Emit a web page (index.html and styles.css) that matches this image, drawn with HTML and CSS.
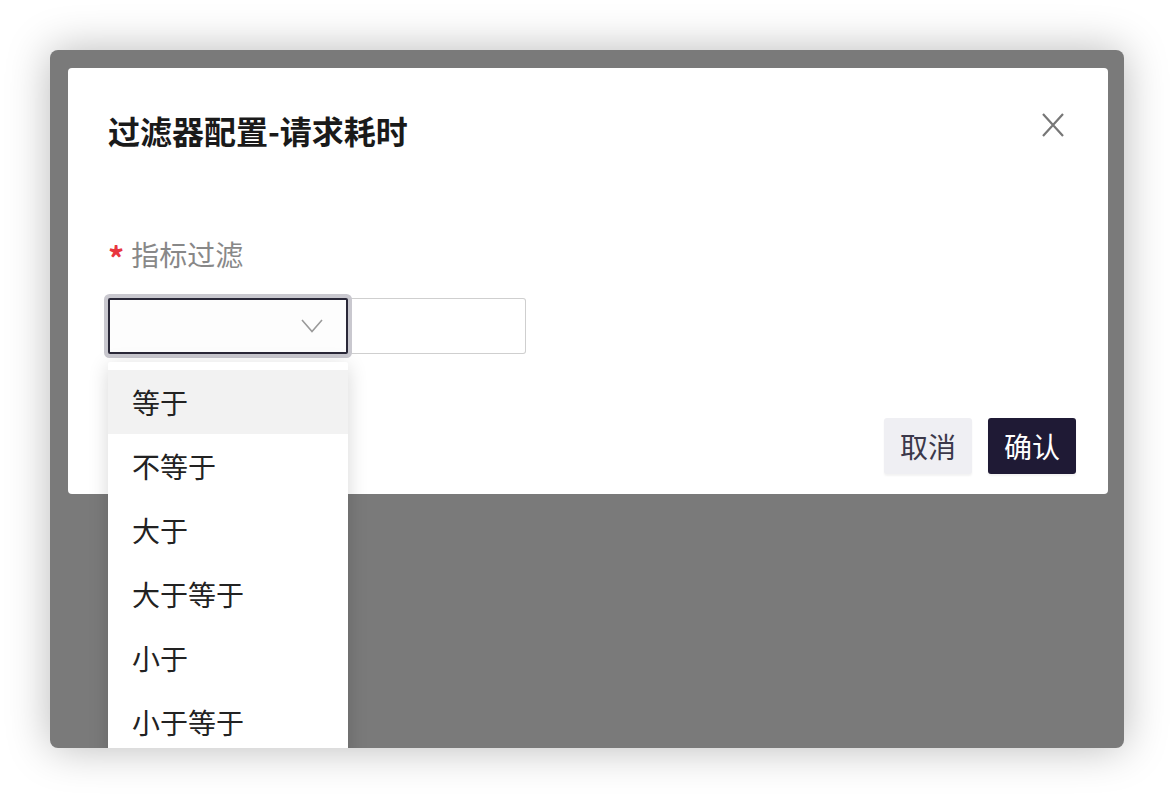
FILE: index.html
```html
<!DOCTYPE html>
<html lang="zh">
<head>
<meta charset="utf-8">
<link rel="stylesheet" href="styles.css">
</head>
<body>
<div class="frame">
  <div class="modal">
    <div class="header">
      <h1 class="title">过滤器配置-请求耗时</h1>
      <button class="close" aria-label="关闭">
        <svg width="22" height="24" viewBox="0 0 22 24"><path d="M1 1 L21 23 M21 1 L1 23" stroke="#777" stroke-width="2.2" fill="none"/></svg>
      </button>
    </div>
    <div class="field">
      <div class="label"><span class="req">*</span>指标过滤</div>
      <div class="controls">
        <div class="select-wrap">
          <div class="select">
            <svg class="chev" width="22" height="14" viewBox="0 0 22 14"><path d="M1 1 L11 12.5 L21 1" stroke="#9a9a9a" stroke-width="1.6" fill="none"/></svg>
          </div>
          <ul class="menu">
            <li class="item active">等于</li>
            <li class="item">不等于</li>
            <li class="item">大于</li>
            <li class="item">大于等于</li>
            <li class="item">小于</li>
            <li class="item">小于等于</li>
          </ul>
        </div>
        <div class="input"></div>
      </div>
    </div>
    <div class="footer">
      <button class="btn cancel">取消</button>
      <button class="btn ok">确认</button>
    </div>
  </div>
</div>
</body>
</html>
```
FILE: styles.css
```css
* { box-sizing: border-box; }
html, body { margin: 0; padding: 0; background: #fff; }
body {
  font-family: "Noto Sans CJK SC", "Noto Sans", sans-serif;
  width: 1174px; height: 798px; overflow: hidden;
}
.frame {
  margin: 50px;
  width: 1074px;
  height: 698px;
  background: #7a7a7a;
  border-radius: 8px;
  overflow: hidden;
  padding: 18px 16px 18px 18px;
  box-shadow: 0 0 44px rgba(0,0,0,0.28);
}
.modal {
  background: #fff;
  border-radius: 4px;
  height: 426px;
  padding: 42px 32px 20px 40px;
  display: flex;
  flex-direction: column;
}
.header {
  display: flex;
  justify-content: space-between;
  align-items: flex-start;
}
.title {
  margin: 0;
  font-size: 32px;
  line-height: 40px;
  font-weight: 700;
  color: #1a1a1a;
}
.close {
  border: none;
  background: none;
  padding: 0;
  margin: 3px 12px 0 0;
  width: 22px;
  height: 24px;
  cursor: pointer;
}
.close svg { display: block; }
.field { margin-top: 84px; }
.label {
  font-size: 28px;
  line-height: 40px;
  color: #888;
  display: flex;
  align-items: center;
}
.req {
  color: #e8363f;
  font-size: 32px;
  font-weight: 700;
  margin-right: 7px;
  position: relative;
  top: 3px;
}
.controls {
  margin-top: 24px;
  display: flex;
}
.select-wrap {
  position: relative;
  width: 240px;
}
.select {
  height: 56px;
  border: 2px solid #2a2838;
  border-radius: 2px;
  box-shadow: 0 0 0 4px #c9c8cf;
  background: #fdfdfd;
  display: flex;
  align-items: center;
  justify-content: flex-end;
  padding-right: 23px;
}
.chev { display: block; }
.input {
  width: 178px;
  height: 56px;
  border: 1px solid #cfcfcf;
  border-left: none;
  border-radius: 0 3px 3px 0;
  background: #fff;
}
.menu {
  position: absolute;
  left: 0;
  top: 64px;
  width: 240px;
  margin: 0;
  padding: 8px 0 8px;
  list-style: none;
  background: #fff;
  border-radius: 2px;
  box-shadow: 0 4px 20px rgba(0,0,0,0.16);
  z-index: 5;
}
.item {
  height: 64px;
  line-height: 64px;
  padding-left: 24px;
  font-size: 28px;
  color: #222;
}
.item.active { background: #f2f2f2; }
.footer {
  margin-top: auto;
  display: flex;
  justify-content: flex-end;
  gap: 16px;
}
.btn {
  width: 88px;
  height: 56px;
  border: none;
  border-radius: 3px;
  font-family: inherit;
  font-size: 28px;
  padding: 0;
  box-shadow: 0 2px 2px rgba(0,0,0,0.05);
}
.cancel { background: #efeff3; color: #3b384a; }
.ok { background: #1f1a35; color: #fff; }
```
